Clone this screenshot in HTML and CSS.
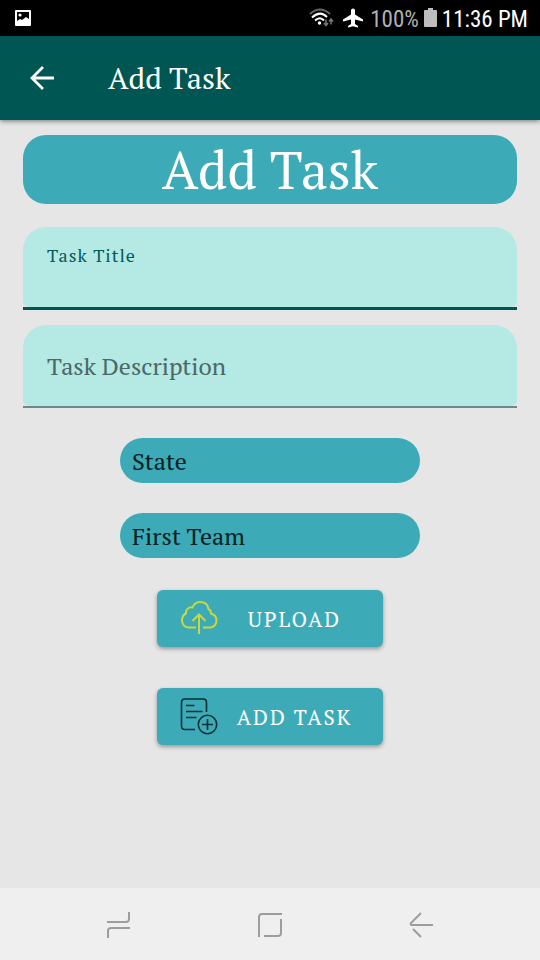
FILE: index.html
```html
<!DOCTYPE html>
<html lang="en">
<head>
<meta charset="utf-8">
<meta name="viewport" content="width=device-width, initial-scale=1">
<title>Add Task</title>
<link rel="stylesheet" href="styles.css">
</head>
<body>
<div class="status">
  <svg width="16" height="16" viewBox="0 0 16 16" aria-hidden="true"><path fill="#fff" fill-rule="evenodd" d="M1 0h14q1 0 1 1v14q0 1-1 1H1q-1 0-1-1V1q0-1 1-1zM2 2v9l3-2 2 1 4-3 3 2V2z"/><circle cx="5" cy="5" r="1.600" fill="#fff"/></svg>
  <div class="status-info">
    <svg width="25" height="20" viewBox="0 0 25 20" fill="none" stroke-width="2" aria-hidden="true"><path stroke="#666" d="M1 6Q11-3 21 6"/><path stroke="#fff" d="M3 9.500Q11 2 18 9M6 12.500q5-4.500 9 0"/><circle cx="10.500" cy="15" r="1.700" fill="#fff"/><path stroke="#777" stroke-width="1.500" d="M17 11.500V17M15 15l2 2.500 2-2.500M22 16.500V11M20 13.500l2-2.500 2 2.500"/></svg>
    <svg class="plane" width="20" height="20" viewBox="2 2 20 20" aria-hidden="true"><path fill="#fff" d="M22 15.500v-2l-8-5V4.500q0-2-2-2t-2 2v4l-8 5v2l8-2v4.500l-3 2v1.500l5-1.200 5 1.200V20l-3-2v-4.500z"/></svg>
    <span class="charge">100%</span>
    <svg width="13" height="20" viewBox="0 0 13 20" aria-hidden="true"><path fill="#bdbdbd" d="M4 0h5v2h3q1 0 1 1v15q0 1-1 1H1q-1 0-1-1V3q0-1 1-1h3z"/></svg>
    <span>11:36 PM</span>
  </div>
</div>
<header class="appbar">
  <button class="back" type="button" aria-label="Back"><svg width="24" height="24" viewBox="0 0 24 24" fill="none" stroke="#fff" stroke-width="2.800"><path d="M24 12H2M13 1 2 12l11 11"/></svg></button>
  <span class="appbar-title">Add Task</span>
</header>
<main class="content">
  <h1 class="banner">Add Task</h1>
  <form class="form">
    <div class="field active">
      <div class="field-fill">
        <label for="title">Task Title</label>
        <input id="title" type="text">
      </div>
    </div>
    <div class="field">
      <div class="field-fill">
        <label for="description">Task Description</label>
        <input id="description" type="text">
      </div>
    </div>
    <div class="choices">
      <select aria-label="State"><option>State</option></select>
      <select aria-label="Team"><option>First Team</option></select>
    </div>
    <div class="actions">
      <button class="action" type="button">
        <svg width="38" height="38" viewBox="0 0 38 38" fill="none" stroke="#c9d83c" stroke-width="2" aria-hidden="true"><path d="M16 27.500H9C4.500 27.500 2 24 2 20.500c0-3.500 2-6 4-7-.5-4 3-7 6.500-6 1.500-4 4.500-5.500 7.500-5.500 5 0 8 3 8.500 7 2 1 2.500 2.500 2.500 4.500 3.500 1 5.500 4 5.500 7 0 4-3 7-6.500 7h-7M19 34V15M12.500 21l6.500-6.500 6.500 6.500"/></svg>
        <span>UPLOAD</span>
      </button>
      <button class="action" type="button">
        <svg width="38" height="38" viewBox="0 0 38 38" fill="none" stroke="#082f33" stroke-width="1.600" aria-hidden="true"><path d="M15 31.500H5Q1.500 31.500 1.500 28V4.500Q1.500 1 5 1h18q3.500 0 3.500 3.500V14M6 7.500h8.500M6 13.500h16.500M6 19.500h10.500M27.500 21v11M22 26.500h11"/><circle cx="27.500" cy="26.500" r="9.200"/></svg>
        <span>ADD TASK</span>
      </button>
    </div>
  </form>
</main>
<nav class="navbar">
  <button type="button" aria-label="Recent apps"><svg width="26" height="28" viewBox="0 0 26 28"><path d="M1 11h19q3 0 3-3V1M24 17H5q-3 0-3 3v7"/></svg></button>
  <button type="button" aria-label="Home"><svg width="26" height="26" viewBox="0 0 26 26"><path d="M2 25V5q0-3 3-3h20M24 7v14q0 3-3 3H7"/></svg></button>
  <button type="button" aria-label="Back"><svg width="26" height="26" viewBox="0 0 26 26"><path d="M13 1 3 11q-1 2 1 2h21M5 17l8 8"/></svg></button>
</nav>
</body>
</html>
```
FILE: styles.css
```css
* { box-sizing: border-box; }
body {
  margin: 0;
  min-height: 100vh;
  display: flex;
  flex-direction: column;
  background: #e6e6e6;
  font-family: "PT Serif", "Liberation Serif", serif;
}
button, input, select { font: inherit; border: 0; margin: 0; }
button { padding: 0; background: none; cursor: pointer; }
svg { display: block; flex: none; }

.status {
  height: 36px;
  padding: 0 12px 0 15px;
  display: flex;
  align-items: center;
  justify-content: space-between;
  background: #000;
  color: #fff;
  font: 23px/32px "Roboto Condensed", "Liberation Sans Narrow", Roboto, sans-serif;
}
.status-info { display: flex; align-items: center; gap: 5px; }
.status-info span { padding-top: 3px; }
.plane { margin: 0 2px 0 4px; }
.charge { color: #b0b0b0; }

.appbar {
  height: 84px;
  padding: 0 30px;
  display: flex;
  align-items: center;
  gap: 54px;
  background: #005652;
  color: #fff;
  box-shadow: 0 1px 5px rgba(0, 0, 0, .5);
}
.appbar-title { font-size: 30px; line-height: 40px; }

.content { flex: 1; padding: 15px 23px; }
.banner {
  margin: 0 0 23px;
  border-radius: 23px;
  background: #3cabb7;
  color: #fff;
  font-size: 53px;
  font-weight: 400;
  line-height: 69px;
  text-align: center;
}
.form { display: flex; flex-direction: column; gap: 15px; }
.field { height: 83px; display: grid; border-bottom: 2px solid #6b8986; }
.field.active { border-bottom: 3px solid #005652; }
.field-fill {
  display: grid;
  align-items: center;
  border-radius: 23px 23px 6px 6px;
  background: #b4e9e4;
}
.field label, .field input { grid-area: 1 / 1; }
.field label { padding: 0 24px; color: #4a6967; font-size: 24px; line-height: 32px; }
.field.active label {
  align-self: start;
  padding-top: 16px;
  color: #075b59;
  font-size: 18px;
  line-height: 24px;
  letter-spacing: 1px;
}
.field input {
  width: 100%;
  height: 100%;
  padding: 24px 24px 0;
  background: none;
  outline: 0;
  font-size: 24px;
}

.choices {
  padding-top: 15px;
  display: flex;
  flex-direction: column;
  align-items: center;
  gap: 30px;
}
select {
  width: 300px;
  max-width: 100%;
  height: 45px;
  padding: 0 12px;
  appearance: none;
  border-radius: 23px;
  background: #3cabb7;
  color: #082123;
  font-size: 24px;
}
.actions {
  padding-top: 17px;
  display: flex;
  flex-direction: column;
  align-items: center;
  gap: 41px;
}
.action {
  width: 226px;
  height: 57px;
  padding: 0 24px 0 23px;
  display: flex;
  align-items: center;
  border-radius: 6px;
  background: #3cabb7;
  box-shadow: 0 2px 4px rgba(0, 0, 0, .35);
  color: #fff;
  font-size: 21px;
  letter-spacing: 2px;
}
.action span { flex: 1; padding-left: 12px; text-align: center; }

.navbar {
  height: 72px;
  padding: 2px 43px 0;
  display: flex;
  align-items: center;
  background: #efefef;
}
.navbar button { flex: 1; display: grid; place-items: center; }
.navbar path { fill: none; stroke: #9d9d9d; stroke-width: 2; }
```
